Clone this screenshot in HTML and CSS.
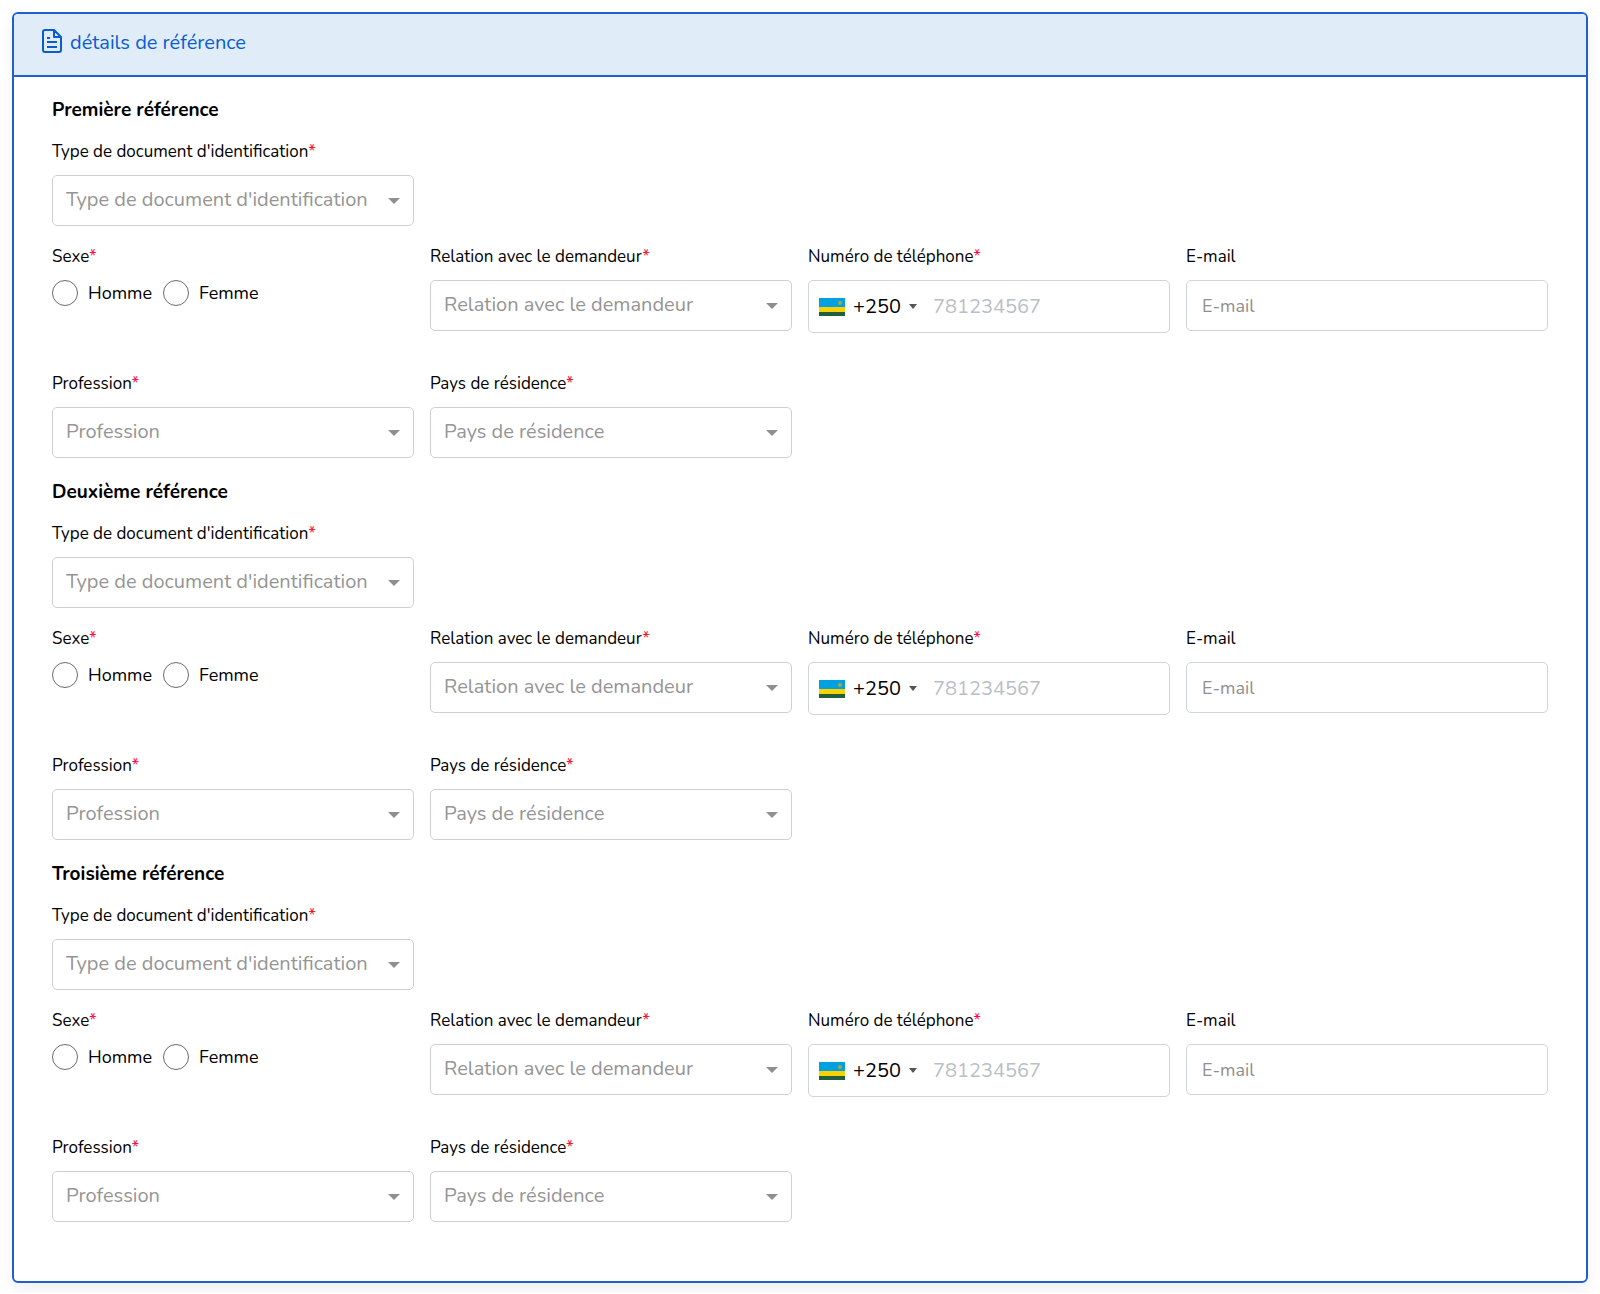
FILE: index.html
```
<!DOCTYPE html>
<html lang="fr">
<head>
<meta charset="utf-8">
<meta name="viewport" content="width=device-width, initial-scale=1">
<title>Détails de référence</title>
<link rel="stylesheet" href="styles.css">
</head>
<body>
<svg class="defs" width="0" height="0">
    <symbol id="flagRw" viewBox="0 0 26 18">
        <rect width="26" height="9" fill="#00a1de"/>
        <rect y="9" width="26" height="5" fill="#fad201"/>
        <rect y="14" width="26" height="4" fill="#20603d"/>
        <circle cx="21" cy="5" r="2" fill="#a3a84a"/>
    </symbol>
</svg>
<form class="card">
    <div class="cardHeader">
        <svg class="fileIcon" viewBox="0 0 20 24">
            <path d="M12 1H3a2 2 0 0 0-2 2v18a2 2 0 0 0 2 2h14a2 2 0 0 0 2-2V8zM12 1v7h7M5 9h3M5 13h10M5 18h10"/>
        </svg>
        <span>détails de référence</span>
    </div>
    <div class="cardBody">

        <section class="reference">
            <h2 class="heading">Première référence</h2>
            <div class="row">
                <div class="field">
                    <label for="docType1">Type de document d'identification<span class="required">*</span></label>
                    <div class="selectBox"><select id="docType1"><option>Type de document d'identification</option></select></div>
                </div>
            </div>
            <div class="row">
                <fieldset class="field">
                    <legend>Sexe<span class="required">*</span></legend>
                    <div class="radios">
                        <input type="radio" name="sex1" id="male1"><label for="male1">Homme</label>
                        <input type="radio" name="sex1" id="female1"><label for="female1">Femme</label>
                    </div>
                </fieldset>
                <div class="field">
                    <label for="relation1">Relation avec le demandeur<span class="required">*</span></label>
                    <div class="selectBox"><select id="relation1"><option>Relation avec le demandeur</option></select></div>
                </div>
                <div class="field">
                    <label for="phone1">Numéro de téléphone<span class="required">*</span></label>
                    <div class="phone">
                        <button type="button" class="dialCode"><svg class="flag"><use href="#flagRw"/></svg>+250</button>
                        <input type="tel" id="phone1" placeholder="781234567">
                    </div>
                </div>
                <div class="field">
                    <label for="email1">E-mail</label>
                    <input type="email" class="textBox" id="email1" placeholder="E-mail">
                </div>
            </div>
            <div class="row lastRow">
                <div class="field">
                    <label for="profession1">Profession<span class="required">*</span></label>
                    <div class="selectBox"><select id="profession1"><option>Profession</option></select></div>
                </div>
                <div class="field">
                    <label for="country1">Pays de résidence<span class="required">*</span></label>
                    <div class="selectBox"><select id="country1"><option>Pays de résidence</option></select></div>
                </div>
            </div>
        </section>

        <section class="reference">
            <h2 class="heading">Deuxième référence</h2>
            <div class="row">
                <div class="field">
                    <label for="docType2">Type de document d'identification<span class="required">*</span></label>
                    <div class="selectBox"><select id="docType2"><option>Type de document d'identification</option></select></div>
                </div>
            </div>
            <div class="row">
                <fieldset class="field">
                    <legend>Sexe<span class="required">*</span></legend>
                    <div class="radios">
                        <input type="radio" name="sex2" id="male2"><label for="male2">Homme</label>
                        <input type="radio" name="sex2" id="female2"><label for="female2">Femme</label>
                    </div>
                </fieldset>
                <div class="field">
                    <label for="relation2">Relation avec le demandeur<span class="required">*</span></label>
                    <div class="selectBox"><select id="relation2"><option>Relation avec le demandeur</option></select></div>
                </div>
                <div class="field">
                    <label for="phone2">Numéro de téléphone<span class="required">*</span></label>
                    <div class="phone">
                        <button type="button" class="dialCode"><svg class="flag"><use href="#flagRw"/></svg>+250</button>
                        <input type="tel" id="phone2" placeholder="781234567">
                    </div>
                </div>
                <div class="field">
                    <label for="email2">E-mail</label>
                    <input type="email" class="textBox" id="email2" placeholder="E-mail">
                </div>
            </div>
            <div class="row lastRow">
                <div class="field">
                    <label for="profession2">Profession<span class="required">*</span></label>
                    <div class="selectBox"><select id="profession2"><option>Profession</option></select></div>
                </div>
                <div class="field">
                    <label for="country2">Pays de résidence<span class="required">*</span></label>
                    <div class="selectBox"><select id="country2"><option>Pays de résidence</option></select></div>
                </div>
            </div>
        </section>

        <section class="reference">
            <h2 class="heading">Troisième référence</h2>
            <div class="row">
                <div class="field">
                    <label for="docType3">Type de document d'identification<span class="required">*</span></label>
                    <div class="selectBox"><select id="docType3"><option>Type de document d'identification</option></select></div>
                </div>
            </div>
            <div class="row">
                <fieldset class="field">
                    <legend>Sexe<span class="required">*</span></legend>
                    <div class="radios">
                        <input type="radio" name="sex3" id="male3"><label for="male3">Homme</label>
                        <input type="radio" name="sex3" id="female3"><label for="female3">Femme</label>
                    </div>
                </fieldset>
                <div class="field">
                    <label for="relation3">Relation avec le demandeur<span class="required">*</span></label>
                    <div class="selectBox"><select id="relation3"><option>Relation avec le demandeur</option></select></div>
                </div>
                <div class="field">
                    <label for="phone3">Numéro de téléphone<span class="required">*</span></label>
                    <div class="phone">
                        <button type="button" class="dialCode"><svg class="flag"><use href="#flagRw"/></svg>+250</button>
                        <input type="tel" id="phone3" placeholder="781234567">
                    </div>
                </div>
                <div class="field">
                    <label for="email3">E-mail</label>
                    <input type="email" class="textBox" id="email3" placeholder="E-mail">
                </div>
            </div>
            <div class="row lastRow">
                <div class="field">
                    <label for="profession3">Profession<span class="required">*</span></label>
                    <div class="selectBox"><select id="profession3"><option>Profession</option></select></div>
                </div>
                <div class="field">
                    <label for="country3">Pays de résidence<span class="required">*</span></label>
                    <div class="selectBox"><select id="country3"><option>Pays de résidence</option></select></div>
                </div>
            </div>
        </section>

    </div>
</form>
</body>
</html>
```
FILE: styles.css
```
* {
    box-sizing: border-box;
}

body {
    margin: 0;
    padding: 12px 12px 10px;
    background: #fff;
    color: #000;
    font-family: Nunito, Lato, sans-serif;
    font-size: 18px;
    line-height: 24px;
}

.defs {
    display: block;
}

.card {
    border: 2px solid #1f5fd3;
    border-radius: 6px;
    background: #fff;
    box-shadow: 0 8px 16px rgba(0, 0, 0, 0.06);
}

.cardHeader {
    display: flex;
    align-items: center;
    gap: 8px;
    height: 63px;
    padding: 0 28px 3px;
    border-bottom: 2px solid #1f5fd3;
    border-radius: 4px 4px 0 0;
    background: #e0ecf8;
    color: #0a5cd0;
    font-size: 20px;
}

.fileIcon {
    width: 20px;
    height: 24px;
    margin-bottom: 4px;
    fill: none;
    stroke: #0a5cd0;
    stroke-width: 2;
    stroke-linejoin: round;
}

.cardBody {
    padding: 21px 38px 37px;
}

.reference {
    padding-bottom: 22px;
}

.heading {
    margin: 0 0 18px;
    font-size: 19px;
    line-height: 24px;
    font-weight: bold;
}

.row {
    display: grid;
    grid-template-columns: repeat(4, 1fr);
    align-items: start;
    gap: 16px;
    margin-bottom: 19px;
}

.lastRow {
    margin-top: 39px;
    margin-bottom: 0;
}

.field {
    min-width: 0;
    margin: 0;
    padding: 0;
    border: 0;
}

.field > label,
.field > legend {
    display: block;
    margin-bottom: 11px;
    padding: 0;
    font-size: 17px;
}

.required {
    color: #ff1035;
}

.selectBox {
    position: relative;
}

.selectBox::after {
    content: "";
    position: absolute;
    top: 23px;
    right: 14px;
    border: 6px solid transparent;
    border-top-color: #8f8f8f;
    border-bottom: 0;
    pointer-events: none;
}

select,
.textBox,
.phone {
    display: block;
    width: 100%;
    height: 51px;
    border: 1px solid #cfcfcf;
    border-radius: 5px;
    background: #fff;
}

select,
.textBox,
.phone input,
.dialCode {
    font-family: inherit;
}

select {
    appearance: none;
    padding: 0 32px 2px 13px;
    color: #959595;
    font-size: 20px;
}

.textBox {
    padding: 0 15px;
    border-color: #ced4da;
    font-size: 18px;
}

.textBox::placeholder {
    color: #8f8f8f;
}

.phone {
    display: flex;
    align-items: center;
    height: 53px;
    border-color: #ced4da;
}

.dialCode {
    display: flex;
    align-items: center;
    padding: 0 16px 0 10px;
    border: 0;
    background: none;
    color: #000;
    font-size: 20px;
}

.dialCode::after {
    content: "";
    margin-left: 8px;
    border: 4px solid transparent;
    border-top: 5px solid #555;
    border-bottom: 0;
}

.flag {
    width: 26px;
    height: 18px;
    margin-right: 8px;
}

.phone input {
    flex: 1;
    min-width: 0;
    padding: 0;
    border: 0;
    background: none;
    font-size: 20px;
}

.phone input::placeholder {
    color: #b8bfc6;
}

.radios {
    display: flex;
    align-items: center;
}

.radios input {
    appearance: none;
    width: 26px;
    height: 26px;
    margin: 0 10px 0 0;
    border: 1px solid #6b6b6b;
    border-radius: 50%;
}

.radios input:checked {
    border: 8px solid #1f5fd3;
}

.radios label {
    margin-right: 11px;
}
```
